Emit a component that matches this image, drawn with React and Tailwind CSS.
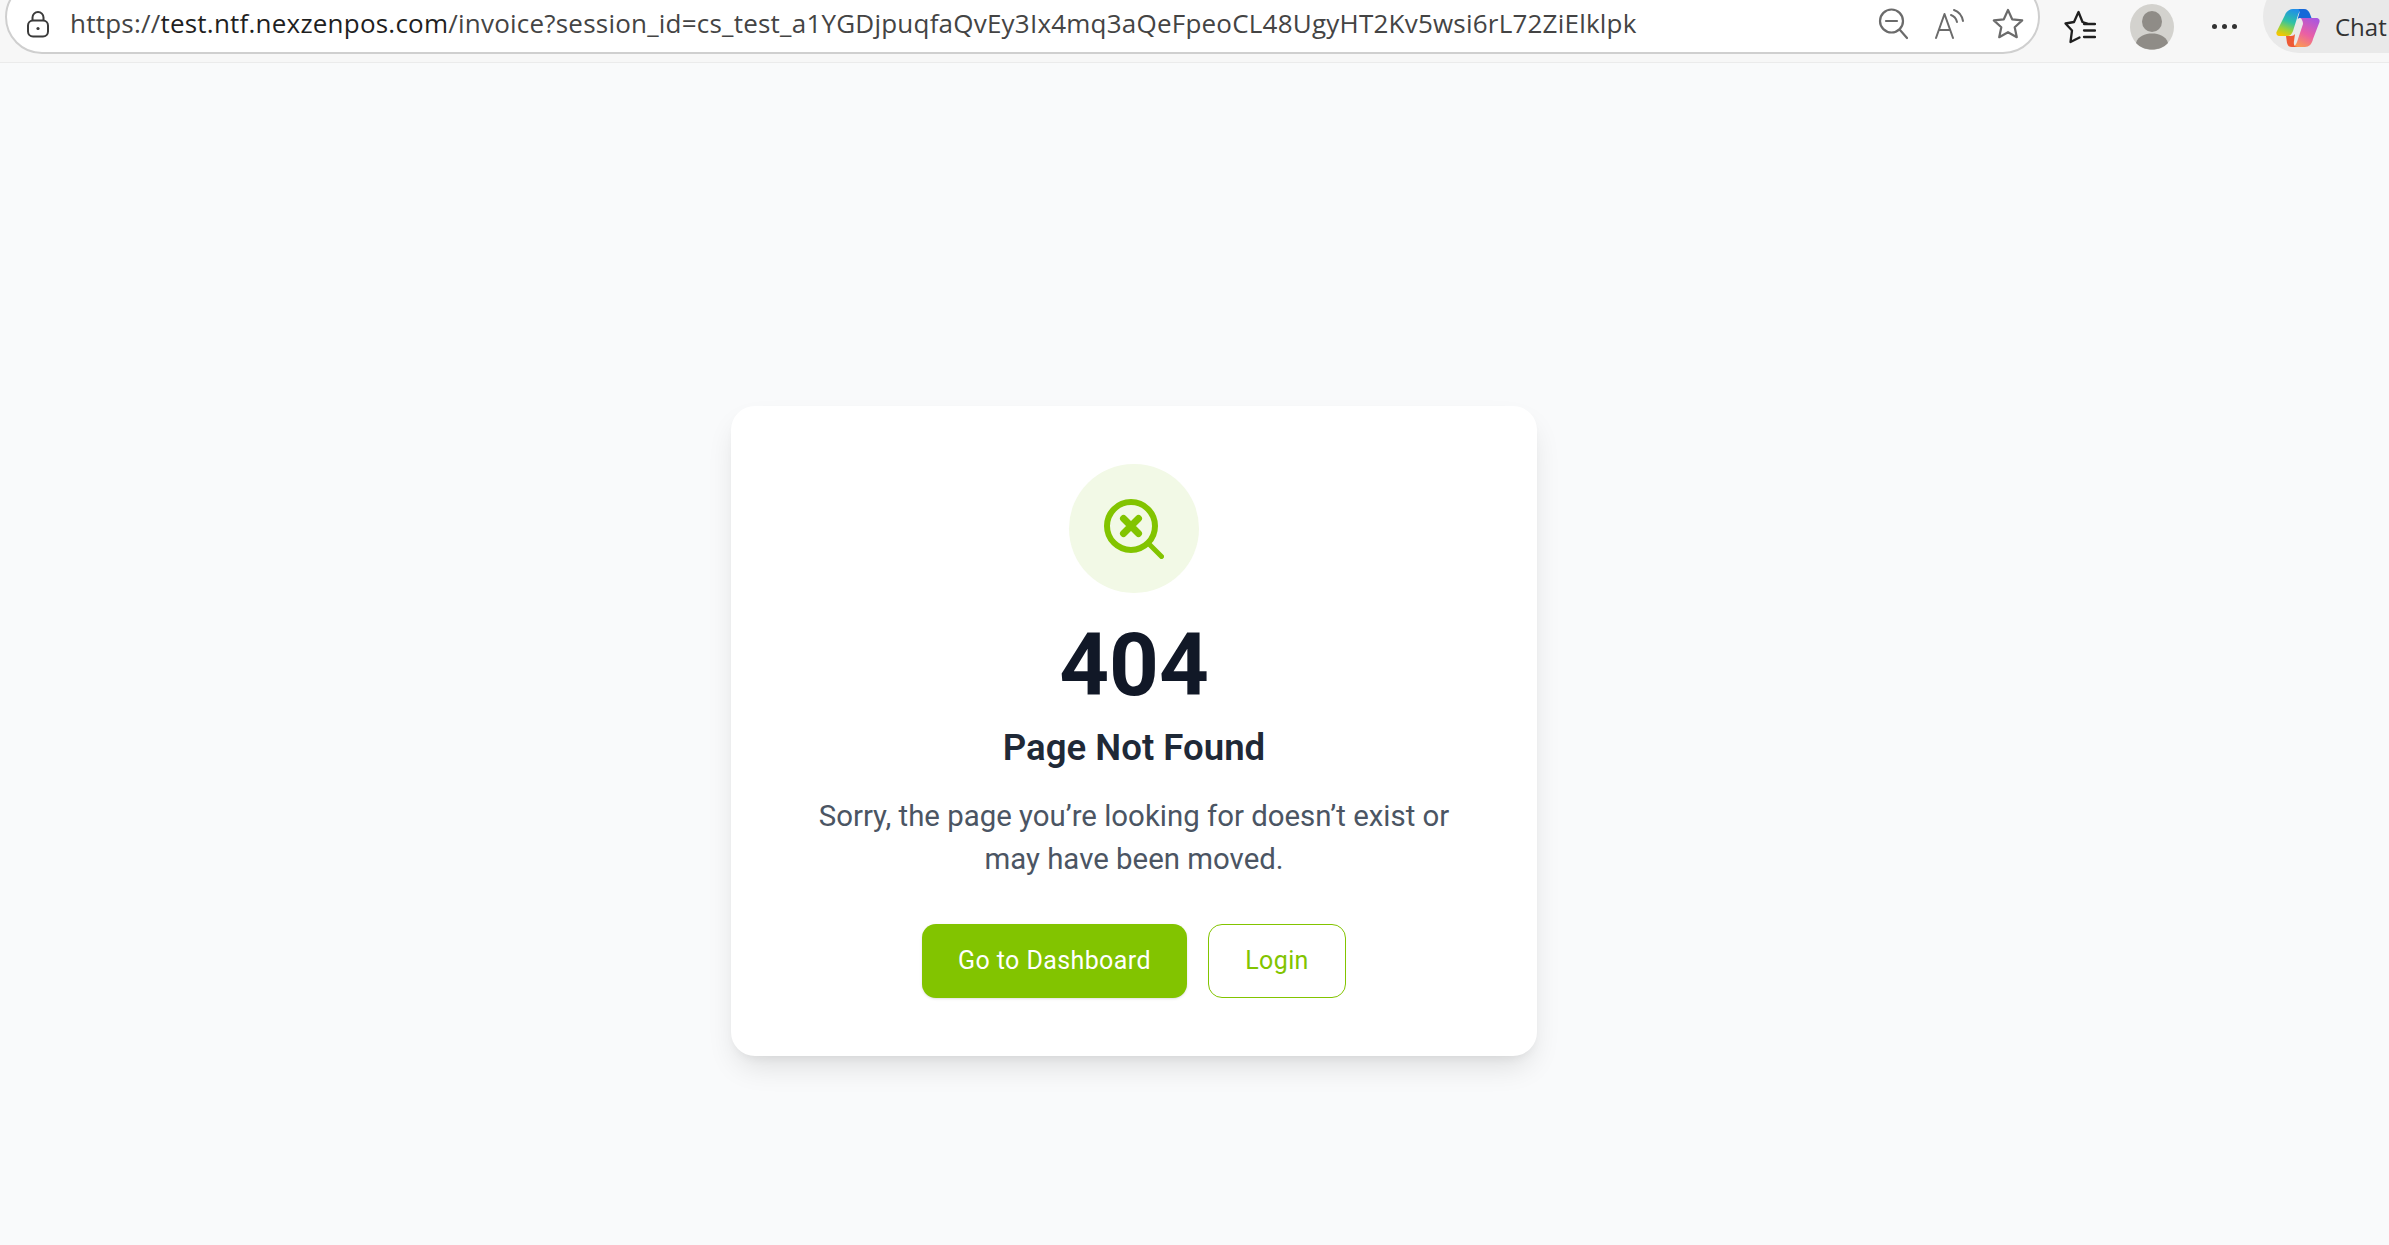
import React from 'react';

const LockIcon = () => (
  <svg width="26" height="28" viewBox="0 0 26 28" fill="none" stroke="#3b3b3b" strokeWidth="2" className="shrink-0">
    <path d="M7.5 11V7.5a5.5 5.5 0 0 1 11 0V11" />
    <rect x="3" y="10.5" width="20" height="16" rx="5" />
    <circle cx="13" cy="18.5" r="1.6" fill="#3b3b3b" stroke="none" />
  </svg>
);

const ZoomOutIcon = () => (
  <svg width="30" height="32" viewBox="0 0 30 32" fill="none" stroke="#6b6b6b" strokeWidth="2.2" strokeLinecap="round">
    <circle cx="13.5" cy="13" r="11.5" />
    <path d="M8 13h11M22 22l7 8" />
  </svg>
);

const ReadAloudIcon = () => (
  <svg width="30" height="32" viewBox="0 0 30 32" fill="none" stroke="#6b6b6b" strokeWidth="2" strokeLinecap="round" strokeLinejoin="round">
    <path d="M1 30 9.500 6 18 30M4 22h11" />
    <path d="M16 7c3 1 5 3 6 7M19 2c4.500 1.500 8 6 9 11" />
  </svg>
);

const StarIcon = () => (
  <svg width="32" height="32" viewBox="0 0 32 32" fill="none" stroke="#6b6b6b" strokeWidth="2.2" strokeLinejoin="round">
    <path d="M16 2l4.200 9.300 10 1.100-7.500 6.800 2.100 10L16 24.200 7.200 29.200l2.100-10-7.500-6.800 10-1.100z" />
  </svg>
);

const FavoritesIcon = () => (
  <svg width="32" height="34" viewBox="0 0 32 34" fill="none" stroke="#1f1f1f" strokeWidth="2.300" strokeLinejoin="round" strokeLinecap="round">
    <path d="M23 13.500 18.500 12 14.500 2 10 12 1.500 13.500l6.500 7-1.500 11.500 9-4.500" />
    <path d="M20 14h11M20 20.500h11M20 27h11" />
  </svg>
);

const AvatarIcon = () => (
  <svg width="44" height="46" viewBox="0 0 44 46" className="shrink-0">
    <ellipse cx="22" cy="23" rx="22" ry="23" fill="#d3d2ce" />
    <ellipse cx="22" cy="17.500" rx="10" ry="10.500" fill="#8f8c87" />
    <path d="M6 39c2-7 9-9.500 16-9.500S36 32 38 39c-4 4.500-10 6.500-16 6.500S10 43.500 6 39z" fill="#8f8c87" />
  </svg>
);

const CopilotIcon = () => (
  <svg width="44" height="40" viewBox="0 0 44 40" className="shrink-0">
    <defs>
      <linearGradient id="cpLeft" x1="0.600" y1="0" x2="0.250" y2="1">
        <stop offset="0" stopColor="#1f8fe8" />
        <stop offset="0.450" stopColor="#2fc2a5" />
        <stop offset="0.750" stopColor="#9ed23a" />
        <stop offset="1" stopColor="#f7c600" />
      </linearGradient>
      <linearGradient id="cpRight" x1="0.800" y1="0" x2="0.300" y2="1">
        <stop offset="0" stopColor="#a957e0" />
        <stop offset="0.550" stopColor="#ea5fa5" />
        <stop offset="1" stopColor="#fb9a52" />
      </linearGradient>
    </defs>
    <path d="M9 8c1-3 4-6 8-6h10c-3 1-4 3-5 6l-5 16c-1 3-3 5-6 5H3c-2 0-3-2-2.500-4z" fill="url(#cpLeft)" />
    <path d="M22 2h6c3 0 5 2 6 5l1.500 4H24c-1 0-2 .5-2.500 1.500l2-7c.3-1.500-.5-3.500-1.500-3.500z" fill="#1668d8" />
    <path d="M24 11h16c3 0 4 2 3.500 4L37 32c-1 5-4 8-8 8H15c3 0 5-2 6-5l3-9 3-9c.3-1-1-6-3-6z" fill="url(#cpRight)" />
    <path d="M10 29h5c2 0 3-1 4-2l-1 7c-.5 3 0 6 4 6h-6c-3 0-4-1-5-4z" fill="#ee5a35" />
  </svg>
);

const NotFoundIcon = () => (
  <svg width="60" height="60" viewBox="0 0 60 60" fill="none" stroke="#82c400" strokeLinecap="round">
    <circle cx="27" cy="27" r="24" strokeWidth="6" />
    <path d="M19.500 19.500l15 15M34.500 19.500l-15 15" strokeWidth="7" />
    <path d="M45 45l12.500 12.500" strokeWidth="5" />
  </svg>
);

const BrowserBar = () => (
  <div className="flex h-[63px] shrink-0 items-start overflow-hidden border-b border-[#ebebeb] bg-[#f7f7f7]">
    <div className="mt-[-20px] ml-[5px] flex h-[74px] w-[2035px] shrink-0 items-center rounded-[37px] border-2 border-[#cfcfcf] bg-white pt-[13px] pr-[14px] pl-[18px]">
      <LockIcon />
      <span className="ml-[19px] text-[26px] whitespace-nowrap text-[#1f1f1f] [font-family:'Open_Sans',sans-serif] tracking-[0.22px]">
        <span className="text-[#444]">https://</span>test.ntf.nexzenpos.com<span className="text-[#444]">/invoice?session_id=cs_test_a1YGDjpuqfaQvEy3Ix4mq3aQeFpeoCL48UgyHT2Kv5wsi6rL72ZiElklpk</span>
      </span>
      <div className="ml-auto flex items-center gap-[27px]">
        <ZoomOutIcon />
        <ReadAloudIcon />
        <StarIcon />
      </div>
    </div>
    <div className="flex h-[53px] flex-1 items-center pl-[24px]">
      <FavoritesIcon />
      <div className="ml-[34px]"><AvatarIcon /></div>
      <span className="ml-[38px] flex gap-[5px]">
        <i className="h-[5px] w-[5px] rounded-full bg-[#333]" />
        <i className="h-[5px] w-[5px] rounded-full bg-[#333]" />
        <i className="h-[5px] w-[5px] rounded-full bg-[#333]" />
      </span>
      <div className="mt-[-20px] ml-[26px] flex h-[73px] flex-1 items-center rounded-l-[36px] bg-[#e9e9e9] pt-[20px] pl-[13px]">
        <CopilotIcon />
        <span className="ml-[15px] text-[24px] text-[#333] [font-family:'Open_Sans',sans-serif]">Chat</span>
      </div>
    </div>
  </div>
);

export default function App() {
  return (
    <div className="flex min-h-screen flex-col bg-[#f9fafb] [font-family:Roboto,sans-serif]">
      <BrowserBar />
      <main className="flex justify-center pt-[343px] pr-[121px]">
        <div className="flex w-[806px] flex-col items-center rounded-[24px] bg-white pt-[58px] pb-[58px] shadow-[0_15px_30px_-6px_rgba(0,0,0,0.12),0_6px_12px_-6px_rgba(0,0,0,0.08)]">
          <div className="flex h-[129px] w-[130px] items-center justify-center rounded-full bg-[#f2f9e6]">
            <NotFoundIcon />
          </div>
          <h1 className="mt-[29px] text-[87px] leading-[86px] font-bold text-[#111827]">404</h1>
          <h2 className="mt-[13px] text-[36.6px] leading-[54px] font-semibold text-[#1f2937]">Page Not Found</h2>
          <p className="mt-[20px] w-[660px] text-center text-[29.4px] leading-[43px] text-[#4b5563]">
            Sorry, the page you’re looking for doesn’t exist or may have been moved.
          </p>
          <div className="mt-[43px] flex gap-[21px]">
            <button className="h-[74px] w-[265px] rounded-[14px] bg-[#82c400] text-[25px] tracking-[0.4px] text-white shadow-sm">Go to Dashboard</button>
            <button className="h-[74px] w-[138px] rounded-[14px] border border-[#82c400] bg-white text-[25px] tracking-[0.4px] text-[#82c400]">Login</button>
          </div>
        </div>
      </main>
    </div>
  );
}
